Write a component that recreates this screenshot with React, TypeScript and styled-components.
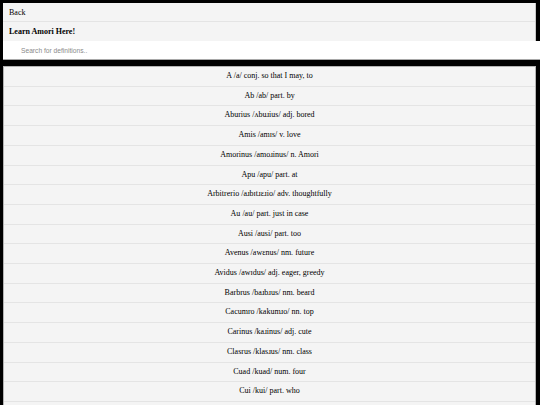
import { FC, useState } from 'react';
import styled, { createGlobalStyle } from 'styled-components';

interface Entry {
    word: string;
    ipa: string;
    kind: string;
    meaning: string;
}

const entries: Entry[] = [
    { word: 'A', ipa: 'a', kind: 'conj.', meaning: 'so that I may, to' },
    { word: 'Ab', ipa: 'ab', kind: 'part.', meaning: 'by' },
    { word: 'Aburius', ipa: 'ʌbuɹius', kind: 'adj.', meaning: 'bored' },
    { word: 'Amis', ipa: 'amɪs', kind: 'v.', meaning: 'love' },
    { word: 'Amorinus', ipa: 'amoɹinus', kind: 'n.', meaning: 'Amori' },
    { word: 'Apu', ipa: 'apu', kind: 'part.', meaning: 'at' },
    { word: 'Arbitrerio', ipa: 'aɹbɪtɹɛɹio', kind: 'adv.', meaning: 'thoughtfully' },
    { word: 'Au', ipa: 'au', kind: 'part.', meaning: 'just in case' },
    { word: 'Ausi', ipa: 'ausi', kind: 'part.', meaning: 'too' },
    { word: 'Avenus', ipa: 'awɛnus', kind: 'nm.', meaning: 'future' },
    { word: 'Avidus', ipa: 'awɪdus', kind: 'adj.', meaning: 'eager, greedy' },
    { word: 'Barbrus', ipa: 'baɹbɹus', kind: 'nm.', meaning: 'beard' },
    { word: 'Cacumro', ipa: 'kakumɹo', kind: 'nn.', meaning: 'top' },
    { word: 'Carinus', ipa: 'kaɹinus', kind: 'adj.', meaning: 'cute' },
    { word: 'Clasrus', ipa: 'klasɹus', kind: 'nm.', meaning: 'class' },
    { word: 'Cuad', ipa: 'kuad', kind: 'num.', meaning: 'four' },
    { word: 'Cui', ipa: 'kui', kind: 'part.', meaning: 'who' },
];

const App: FC = () => {
    const [query, setQuery] = useState('');

    const shown = entries.filter((e) =>
        `${e.word} ${e.meaning}`.toLowerCase().includes(query.toLowerCase())
    );

    return (
        <>
            <GlobalStyle />
            <Page>
                <Header>
                    <HeaderRow>Back</HeaderRow>
                    <HeaderRow bold>Learn Amori Here!</HeaderRow>
                </Header>
                <Search
                    placeholder="Search for definitions.."
                    value={query}
                    onChange={(ev) => setQuery(ev.target.value)}
                />
                <List>
                    {shown.map((e) => (
                        <Item key={e.word}>
                            {e.word} /{e.ipa}/ {e.kind} {e.meaning}
                        </Item>
                    ))}
                </List>
            </Page>
        </>
    );
};

export default App;

const GlobalStyle = createGlobalStyle`
    html, body {
        margin: 0;
        background: #000;
        overflow: hidden;
    }
    body {
        font-family: "Liberation Serif", "Times New Roman", serif;
        font-size: 8px;
        color: #000;
    }
`;
const Page = styled.div`
    display: flex;
    flex-direction: column;
    padding: 3px 4px 0 3px;
    height: 405px;
    box-sizing: border-box;
    & > * {
        flex-shrink: 0;
    }
`;
const Header = styled.div`
    display: flex;
    flex-direction: column;
    background: #f4f4f4;
    border-right: 1px solid #c8c8c8;
`;
const HeaderRow = styled.div<{ bold?: boolean }>`
    height: 19px;
    line-height: 19px;
    padding-left: 6px;
    font-weight: ${({ bold }) => (bold ? 'bold' : 'normal')};
    border-bottom: 1px solid #e4e4e4;
    box-sizing: border-box;
    &:last-child {
        border-bottom: none;
    }
`;
const Search = styled.input`
    display: block;
    width: calc(100% + 4px);
    height: 19px;
    box-sizing: border-box;
    margin: 0;
    padding: 0 0 0 18px;
    border: none;
    border-bottom: 1px solid #a8a8a8;
    background: #fff;
    font-family: "Liberation Sans", Arial, sans-serif;
    font-size: 6.67px;
    outline: none;
    &::placeholder {
        color: #8a8a8a;
    }
`;
const List = styled.div`
    flex: 1 0 auto;
    margin-top: 6px;
    display: flex;
    flex-direction: column;
    background: #f4f4f4;
    border: 1px solid #b4b4b4;
    border-bottom: none;
`;
const Item = styled.div`
    padding: 5px 0;
    line-height: 8.7px;
    text-align: center;
    border-bottom: 1px solid #e4e4e4;
`;
